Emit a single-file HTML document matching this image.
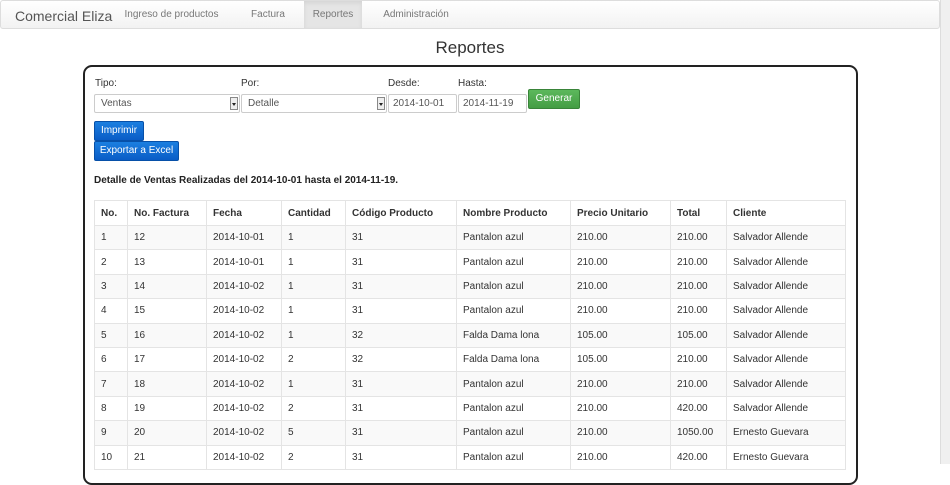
<!DOCTYPE html>
<html><head><meta charset="utf-8"><style>
*{box-sizing:border-box}
body{margin:0;width:950px;height:464px;overflow:hidden;background:#fff;font-family:"Liberation Sans",Arial,sans-serif;font-size:10px;color:#333;position:relative}
.nav{position:absolute;left:0;top:0;width:940px;height:29px;background:linear-gradient(#fff,#f2f2f2);border:1px solid #ddd;border-radius:3px}
.brand{position:absolute;left:14px;top:7px;font-size:14px;color:#555}
.ni{position:absolute;top:0;height:27px;line-height:27px;font-size:10px;color:#777;text-align:center}
.act{background:#e5e5e5;box-shadow:inset 0 2px 4px rgba(0,0,0,.08)}
.sb{position:absolute;left:940px;top:0;width:10px;height:464px;background:#f0f0f0;border-left:1px solid #ddd}
.th{position:absolute;left:942px;top:13px;width:7px;height:102px;background:#fcfcfc;border:1px solid #ccc;border-radius:2px}
h1{position:absolute;left:0;width:940px;top:38px;margin:0;text-align:center;font-size:17px;font-weight:normal;color:#333}
.panel{position:absolute;left:83px;top:65px;width:775px;height:420px;border:2px solid #222;border-radius:9px}
.lbl{position:absolute;top:78px;font-size:10px}
.inp{position:absolute;top:94px;height:19px;border:1px solid #ccc;border-radius:2px;font-size:10px;line-height:17px;padding-left:6px;color:#555;background:#fff}
.arr{position:absolute;right:1px;top:2px;width:8px;height:13px;background:#eee;border:1px solid #888}
.arr:after{content:"";position:absolute;left:1px;top:5px;border:2.5px solid transparent;border-top:3px solid #222}
.btn{position:absolute;color:#fff;font-size:10px;text-align:center;border-radius:2px}
.blue{background:linear-gradient(#1b7fe0,#0a5cc6);border:1px solid #0750a8}
.green{background:linear-gradient(#5cb85c,#449d44);border:1px solid #398439}
.title{position:absolute;left:94px;top:175px;font-weight:bold;font-size:10px;color:#222}
table{position:absolute;left:94px;top:200px;width:752px;border-collapse:collapse;font-size:10px}
td,th{border:1px solid #e4e4e4;padding:0 0 0 6px;height:24.4px;text-align:left}
th{font-weight:bold;color:#333;height:25px}
tbody tr:nth-child(odd){background:#f9f9f9}
</style></head><body>
<div class="nav">
<div class="brand">Comercial Eliza</div>
<div class="ni" style="left:110px;width:121px">Ingreso de productos</div>
<div class="ni" style="left:231px;width:72px">Factura</div>
<div class="ni act" style="left:303px;width:58px">Reportes</div>
<div class="ni" style="left:361px;width:108px">Administración</div>
</div>
<div class="sb"><div class="th"></div></div>
<h1>Reportes</h1>
<div class="panel"></div>
<div class="lbl" style="left:95px">Tipo:</div>
<div class="lbl" style="left:241px">Por:</div>
<div class="lbl" style="left:388px">Desde:</div>
<div class="lbl" style="left:458px">Hasta:</div>
<div class="inp" style="left:94px;width:146px">Ventas<div class="arr"></div></div>
<div class="inp" style="left:241px;width:146px">Detalle<div class="arr"></div></div>
<div class="inp" style="left:388px;width:69px;padding-left:4px">2014-10-01</div>
<div class="inp" style="left:458px;width:69px;padding-left:4px">2014-11-19</div>
<div class="btn green" style="left:528px;top:89px;width:52px;height:20px;line-height:18px">Generar</div>
<div class="btn blue" style="left:94px;top:121px;width:50px;height:20px;line-height:18px">Imprimir</div>
<div class="btn blue" style="left:94px;top:141px;width:85px;height:20px;line-height:18px">Exportar a Excel</div>
<div class="title">Detalle de Ventas Realizadas del 2014-10-01 hasta el 2014-11-19.</div>
<table>
<colgroup><col style="width:33px"><col style="width:79px"><col style="width:75px"><col style="width:64px"><col style="width:111px"><col style="width:114px"><col style="width:100px"><col style="width:56px"><col></colgroup>
<thead><tr><th>No.</th><th>No. Factura</th><th>Fecha</th><th>Cantidad</th><th>Código Producto</th><th>Nombre Producto</th><th>Precio Unitario</th><th>Total</th><th>Cliente</th></tr></thead>
<tbody>
<tr><td>1</td><td>12</td><td>2014-10-01</td><td>1</td><td>31</td><td>Pantalon azul</td><td>210.00</td><td>210.00</td><td>Salvador Allende</td></tr>
<tr><td>2</td><td>13</td><td>2014-10-01</td><td>1</td><td>31</td><td>Pantalon azul</td><td>210.00</td><td>210.00</td><td>Salvador Allende</td></tr>
<tr><td>3</td><td>14</td><td>2014-10-02</td><td>1</td><td>31</td><td>Pantalon azul</td><td>210.00</td><td>210.00</td><td>Salvador Allende</td></tr>
<tr><td>4</td><td>15</td><td>2014-10-02</td><td>1</td><td>31</td><td>Pantalon azul</td><td>210.00</td><td>210.00</td><td>Salvador Allende</td></tr>
<tr><td>5</td><td>16</td><td>2014-10-02</td><td>1</td><td>32</td><td>Falda Dama lona</td><td>105.00</td><td>105.00</td><td>Salvador Allende</td></tr>
<tr><td>6</td><td>17</td><td>2014-10-02</td><td>2</td><td>32</td><td>Falda Dama lona</td><td>105.00</td><td>210.00</td><td>Salvador Allende</td></tr>
<tr><td>7</td><td>18</td><td>2014-10-02</td><td>1</td><td>31</td><td>Pantalon azul</td><td>210.00</td><td>210.00</td><td>Salvador Allende</td></tr>
<tr><td>8</td><td>19</td><td>2014-10-02</td><td>2</td><td>31</td><td>Pantalon azul</td><td>210.00</td><td>420.00</td><td>Salvador Allende</td></tr>
<tr><td>9</td><td>20</td><td>2014-10-02</td><td>5</td><td>31</td><td>Pantalon azul</td><td>210.00</td><td>1050.00</td><td>Ernesto Guevara</td></tr>
<tr><td>10</td><td>21</td><td>2014-10-02</td><td>2</td><td>31</td><td>Pantalon azul</td><td>210.00</td><td>420.00</td><td>Ernesto Guevara</td></tr>
</tbody></table>
</body></html>
